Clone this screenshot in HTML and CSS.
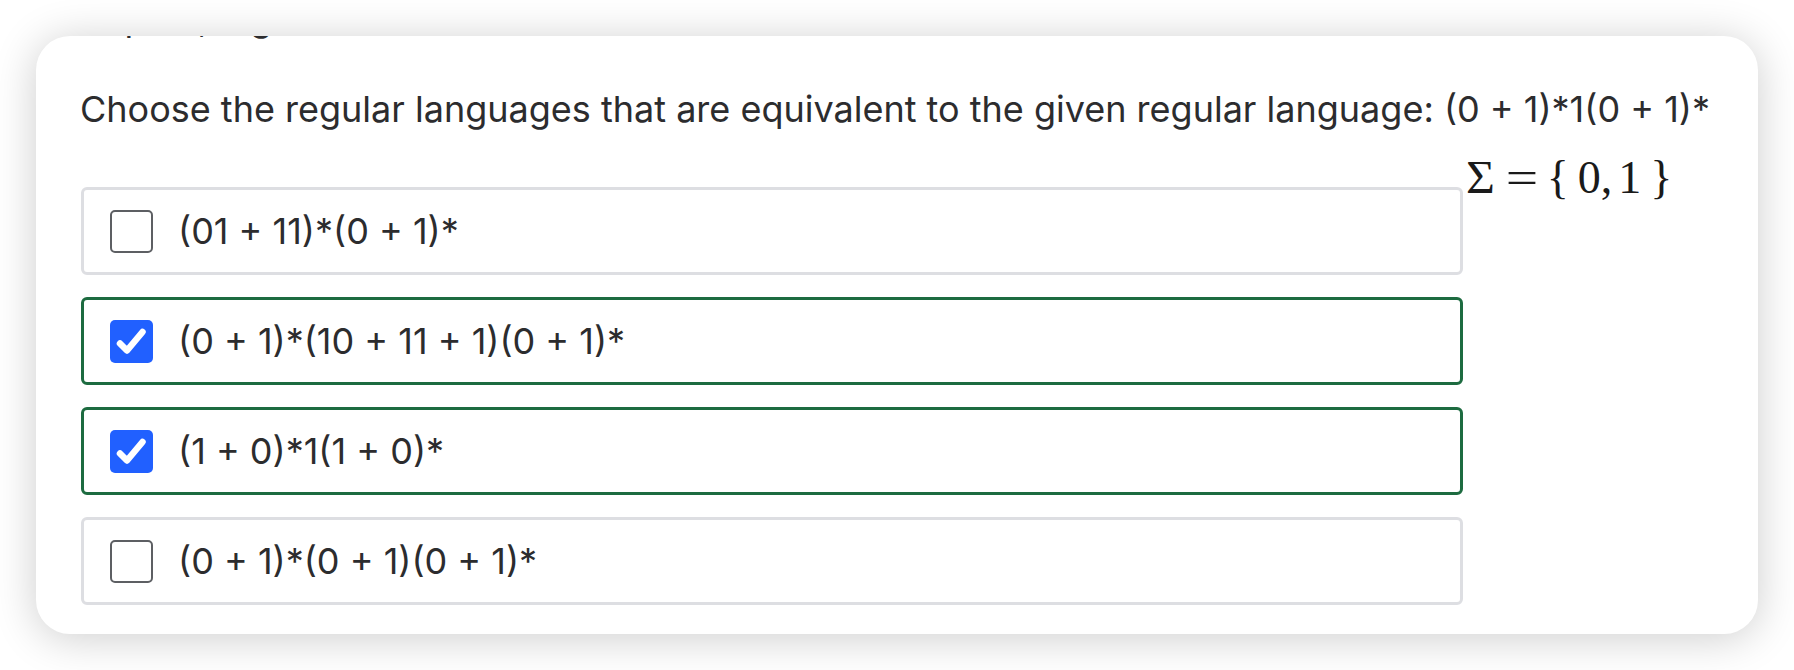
FILE: index.html
```html
<!DOCTYPE html>
<html lang="en">
<head>
<meta charset="utf-8">
<title>Regular languages</title>
<link rel="stylesheet" href="styles.css">
</head>
<body>
<div class="page">
  <div class="card">
    <p class="prev-line">Sup ha, n g ab)</p>
    <p class="question">Choose the regular languages that are equivalent to the given regular language: (0 + 1)*1(0 + 1)*</p>
    <div class="answer-row">
      <ul class="options">
        <li class="option">
          <span class="box"></span>
          <span class="label">(01 + 11)*(0 + 1)*</span>
        </li>
        <li class="option selected">
          <span class="box checked"><svg viewBox="0 0 43 43" width="43" height="43"><path d="M10 23.5 L17 30.5 L32.5 12" fill="none" stroke="#fff" stroke-width="6.5" stroke-linecap="round" stroke-linejoin="round"/></svg></span>
          <span class="label">(0 + 1)*(10 + 11 + 1)(0 + 1)*</span>
        </li>
        <li class="option selected">
          <span class="box checked"><svg viewBox="0 0 43 43" width="43" height="43"><path d="M10 23.5 L17 30.5 L32.5 12" fill="none" stroke="#fff" stroke-width="6.5" stroke-linecap="round" stroke-linejoin="round"/></svg></span>
          <span class="label">(1 + 0)*1(1 + 0)*</span>
        </li>
        <li class="option">
          <span class="box"></span>
          <span class="label">(0 + 1)*(0 + 1)(0 + 1)*</span>
        </li>
      </ul>
      <div class="alphabet"><span class="sym">Σ</span><span class="rel">=</span><span class="brace">{</span><span>0,</span><span class="one">1</span><span class="brace close">}</span></div>
    </div>
  </div>
</div>
</body>
</html>
```

FILE: styles.css
```css
* { box-sizing: border-box; }

html, body {
  margin: 0;
  background: #ffffff;
}

body {
  font-family: Inter, "Noto Sans", "Liberation Sans", sans-serif;
  color: #2c2c2e;
}

.page {
  padding: 36px;
}

.card {
  background: #ffffff;
  border-radius: 34px;
  box-shadow: 0 4px 44px rgba(0, 0, 0, 0.2);
  overflow: hidden;
  padding: 0 44px 29px 44px;
}

.prev-line {
  margin: -36px 0 0 0;
  height: 36px;
  font-size: 36px;
  line-height: 36px;
  white-space: nowrap;
}

.question {
  margin: 51px 0 0 0;
  font-size: 36px;
  line-height: 44px;
  white-space: nowrap;
}

.answer-row {
  display: flex;
  align-items: flex-start;
  margin-top: 22px;
}

.options {
  list-style: none;
  margin: 34px 0 0 1px;
  padding: 0;
  width: 1382px;
  display: flex;
  flex-direction: column;
  gap: 22px;
}

.option {
  height: 88px;
  display: flex;
  align-items: center;
  gap: 25px;
  padding: 0 26px;
  border: 3px solid #dddee2;
  border-radius: 6px;
}

.option.selected {
  border-color: #1d6b40;
}

.box {
  flex: none;
  width: 43px;
  height: 43px;
  border: 2px solid #5d5f63;
  border-radius: 5px;
  background: #fff;
}

.box.checked {
  border: none;
  background: #2160ff;
}

.box svg {
  display: block;
}

.label {
  font-size: 36px;
  line-height: 44px;
  white-space: nowrap;
}

.alphabet {
  margin-left: 4px;
  font-family: "Liberation Serif", "DejaVu Serif", serif;
  font-size: 46px;
  line-height: 50px;
  color: #1a1a1a;
  white-space: nowrap;
}

.sym {
  display: inline-block;
  transform: scaleX(1.08);
}

.rel {
  display: inline-block;
  margin: 0 12px 0 15px;
  transform: scaleX(1.25);
}

.brace {
  margin-right: 9px;
}

.brace.close {
  margin: 0 0 0 9px;
}

.one {
  margin-left: 6px;
}
```
